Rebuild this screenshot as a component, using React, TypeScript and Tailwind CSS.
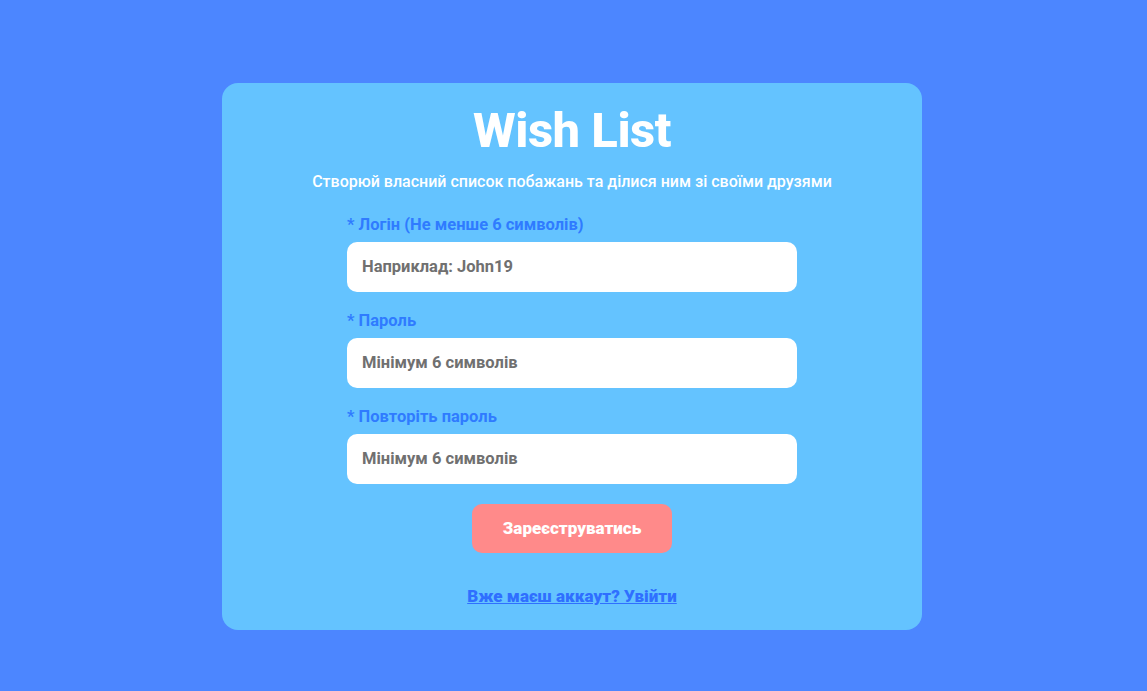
import React from 'react';

function Field({ label, placeholder }: { label: string; placeholder: string }) {
  return (
    <div className="flex flex-col">
      <label className="text-[16.5px] font-bold text-[#2f7bff] leading-[18px] mb-[8px]">* {label}</label>
      <div className="h-[50px] w-[450px] bg-white rounded-[10px] flex items-center px-[15px] text-[16.5px] font-bold text-[#707070]">
        {placeholder}
      </div>
    </div>
  );
}

export default function App() {
  return (
    <div className="min-h-[691px] w-full bg-[#4c86ff] flex pl-[222px] pt-[83px] font-['Roboto',sans-serif]">
      <div className="w-[700px] h-[547px] bg-[#64c3ff] rounded-[16px] flex flex-col items-center">
        <h1 className="text-[49px] font-extrabold text-white leading-none mt-[23px] tracking-[-0.5px]">Wish List</h1>
        <p className="text-[16px] font-medium text-white mt-[17px] leading-5">
          Створюй власний список побажань та ділися ним зі своїми друзями
        </p>
        <div className="flex flex-col gap-[20px] mt-[24px]">
          <Field label="Логін (Не менше 6 символів)" placeholder="Наприклад: John19" />
          <Field label="Пароль" placeholder="Мінімум 6 символів" />
          <Field label="Повторіть пароль" placeholder="Мінімум 6 символів" />
        </div>
        <button className="mt-[20px] w-[200px] h-[49px] rounded-[10px] bg-[#ff8a8a] text-white text-[17px] font-black">
          Зареєструватись
        </button>
        <a href="#" className="mt-[33px] text-[17px] font-black text-[#2f6fff] underline leading-5">
          Вже маєш аккаут? Увійти
        </a>
      </div>
    </div>
  );
}
